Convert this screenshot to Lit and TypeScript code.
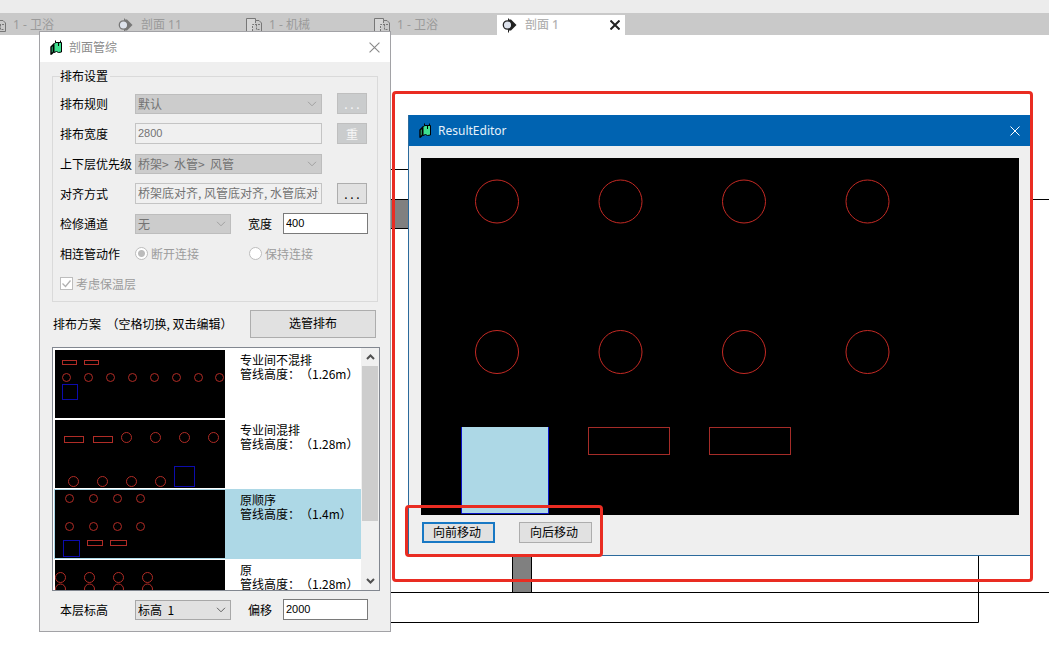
import { LitElement, html, svg, css } from "lit";
import { customElement, property } from "lit/decorators.js";

type Circle = [number, number, number];
type Box = [number, number, number, number];

interface Scheme {
  name: string;
  height: string;
  circles: Circle[];
  ducts: Box[];
  tray?: Box;
}

const row = (xs: number[], y: number, r: number): Circle[] => xs.map((x) => [x, y, r]);

const SCHEMES: Scheme[] = [
  {
    name: "专业间不混排",
    height: "1.26m",
    circles: row([11.5, 33.5, 55.5, 77.5, 99.5, 121.5, 143.5, 164.5], 27.5, 4),
    ducts: [[7.5, 10.5, 14, 4], [29.5, 10.5, 14, 4]],
    tray: [7.5, 34.5, 15, 15],
  },
  {
    name: "专业间混排",
    height: "1.28m",
    circles: [
      ...row([71.5, 100.5, 129.5, 158.5], 17.5, 5),
      ...row([18.5, 47.5, 76.5, 105.5], 61.5, 5),
    ],
    ducts: [[9.5, 16.5, 19, 6], [38.5, 16.5, 19, 6]],
    tray: [119.5, 46.5, 20, 20],
  },
  {
    name: "原顺序",
    height: "1.4m",
    circles: [
      ...row([14.5, 38.5, 62.5, 85.5], 8.5, 4),
      ...row([14.5, 38.5, 62.5, 85.5], 36.5, 4),
    ],
    ducts: [[32.5, 50.5, 15, 5], [55.5, 50.5, 16, 5]],
    tray: [8.5, 50.5, 16, 16],
  },
  {
    name: "原",
    height: "1.28m",
    circles: [
      ...row([5.5, 34.5, 63.5, 92.5], 17.5, 5),
      ...row([5.5, 34.5, 63.5, 92.5], 29, 5),
    ],
    ducts: [],
  },
];

const appIcon = html`<svg width="13" height="15" viewBox="0 0 13 15" aria-hidden="true">
  <path d="M1 7 3.5 4.5V12L1.5 14H1z" fill="#2fae70" stroke="#000" stroke-width="1.4" />
  <path d="M4 4.5 5.5 2.5H11.5V12L8.5 12.5 6.5 11.5 4 12.5z" fill="#3ee08f" stroke="#000" />
  <path d="M5.5 0.5V2.5M10.5 0.5V2.5M8.5 3v3" stroke="#000" fill="none" />
</svg>`;

const cross = (size: number, width: number) => html`<svg
  width=${size} height=${size} viewBox="0 0 10 10" aria-hidden="true">
  <path d="M0.5 0.5 9.5 9.5M9.5 0.5 0.5 9.5" stroke="currentColor" stroke-width=${width} fill="none" />
</svg>`;

const sectionIcon = html`<svg width="16" height="16" viewBox="0 0 16 16" aria-hidden="true">
  <path d="M6.5 1.5v14" stroke="currentColor" />
  <path d="M7 2.5H9L14.5 8 9 13.5H7z" fill="currentColor" />
  <circle cx="5.5" cy="8" r="4.2" fill="#dde2ec" stroke="currentColor" stroke-width="1.3" />
</svg>`;

const planIcon = html`<svg width="16" height="16" viewBox="0 0 16 16" aria-hidden="true" fill="none" stroke="currentColor">
  <path d="M6 14.5H0.5V1.5H9.5V3.5" fill="#d6d6d6" />
  <path d="M9.5 6V3.5H13L15.5 6V14.5H0.5" />
  <path d="M6.5 14V7.5H14M10.5 7.5V12.5H14" stroke-dasharray="2 1" />
</svg>`;

@customElement("scheme-item")
export class SchemeItem extends LitElement {
  @property({ attribute: false }) scheme!: Scheme;

  static styles = css`
    :host { display: flex; gap: 15px; padding: 1px; height: 68px; }
    .thumb { display: block; flex: none; background: #000; fill: none; }
    .duct { stroke: #b02c26; }
    .tray { stroke: #0c0cac; }
    .text { padding-top: 3px; line-height: 14px; white-space: nowrap; text-spacing-trim: space-all; }
  `;

  render() {
    const s = this.scheme;
    return html`
      <svg class="thumb" width="170" height="68" aria-hidden="true">
        ${s.ducts.map(([x, y, w, h]) => svg`<rect class="duct" x=${x} y=${y} width=${w} height=${h} />`)}
        ${s.circles.map(([x, y, r]) => svg`<circle class="duct" cx=${x} cy=${y} r=${r} />`)}
        ${s.tray
          ? svg`<rect class="tray" x=${s.tray[0]} y=${s.tray[1]} width=${s.tray[2]} height=${s.tray[3]} />`
          : null}
      </svg>
      <div class="text">
        <div>${s.name}</div>
        <div>管线高度：（${s.height}）</div>
      </div>
    `;
  }
}

@customElement("arrange-dialog")
export class ArrangeDialog extends LitElement {
  static styles = css`
    :host {
      display: block; box-sizing: border-box; width: 352px; background: #efefef;
      border: 1px solid #a2a2a6; padding-bottom: 11px; color: #000;
      font: 12px/16px "Noto Sans CJK SC", sans-serif;
    }
    .title {
      display: flex; align-items: center; gap: 6px; height: 30px; padding: 0 10px;
      background: #fff; color: #8c8c8c;
    }
    .title h1 { margin: 0; flex: 1; font: inherit; }
    .close { display: flex; padding: 0; border: 0; background: none; color: #888; }
    input, select, button { box-sizing: border-box; margin: 0; font: inherit; color: inherit; border-radius: 0; }
    fieldset {
      margin: 6px 12px 0; padding: 9px 7px 7px; border: 1px solid #dadada;
      display: flex; flex-direction: column; gap: 9px; min-width: 0;
    }
    legend { padding: 0 2px 0 0; margin: 0; height: 16px; }
    .row { display: flex; align-items: center; height: 21px; }
    .label { flex: none; width: 75px; white-space: nowrap; }
    .side-label { flex: none; width: 35px; margin-left: 17px; }
    select {
      appearance: none; height: 20px; width: 96px; padding: 0 18px 0 2px; line-height: 18px;
      border: 1px solid #a8a8a8; background: #e1e1e1 no-repeat right 4px center;
      background-image: url("data:image/svg+xml,%3Csvg xmlns='http://www.w3.org/2000/svg' width='10' height='6'%3E%3Cpath d='M1 .8l4 4 4-4' fill='none' stroke='%23606060'/%3E%3C/svg%3E");
    }
    select:disabled {
      border-color: #bdbdbd; background-color: #cccccc; color: #737373; opacity: 1;
      background-image: url("data:image/svg+xml,%3Csvg xmlns='http://www.w3.org/2000/svg' width='10' height='6'%3E%3Cpath d='M1 .8l4 4 4-4' fill='none' stroke='%23a0a0a0'/%3E%3C/svg%3E");
    }
    .wide, select.wide { width: 187px; }
    .text {
      height: 21px; padding: 0 2px 2px; border: 1px solid #7a7a7a; background: #fff;
    }
    .text.muted { border-color: #c4c4c4; background: #f0f0f0; color: #737373; }
    .number { width: 85px; }
    .digits { font-family: "Liberation Sans", "Noto Sans CJK SC", sans-serif; font-size: 11px; }
    .small {
      width: 30px; height: 21px; margin-left: 15px; padding: 0; line-height: 16px;
      border: 1px solid #adadad; background: #e1e1e1;
    }
    .small:disabled { border-color: #bfbfbf; background: #cacccd; color: #f6f6f6; }
    .option { display: flex; align-items: center; gap: 3px; width: 114px; color: #9c9c9c; white-space: nowrap; }
    .option input { appearance: none; flex: none; width: 13px; height: 13px; border: 1px solid #bdbdbd; background: #fff; }
    .option input[type="radio"] { border-radius: 50%; }
    .option input[type="radio"]:checked { background: radial-gradient(circle, #bcbcbc 3px, #fff 4px); }
    .option input[type="checkbox"]:checked {
      background: #fff url("data:image/svg+xml,%3Csvg xmlns='http://www.w3.org/2000/svg' width='11' height='11'%3E%3Cpath d='M1.5 5.5l3 3 5-6' fill='none' stroke='%23b0b0b0' stroke-width='1.3'/%3E%3C/svg%3E") center no-repeat;
    }
    .plan { display: flex; align-items: center; justify-content: space-between; margin: 8px 14px 9px 13px; }
    .plan span { white-space: pre; text-spacing-trim: space-all; }
    .pick { width: 126px; height: 28px; padding: 0 0 2px; border: 1px solid #adadad; background: #e1e1e1; }
    .list {
      display: flex; box-sizing: border-box; height: 244px; margin: 0 10px 8px 12px; padding-left: 1px;
      border: 1px solid #828790; background: #fff; overflow: hidden;
    }
    .items { flex: 1; min-width: 0; padding-top: 1px; }
    .items .active { background: #add8e6; }
    .scroll { display: flex; flex-direction: column; align-items: center; width: 18px; background: #f0f0f0; }
    .scroll button {
      display: flex; align-items: center; justify-content: center; flex: none;
      height: 18px; width: 15px; padding: 0; border: 0; background: none; color: #505050;
    }
    .track { flex: 1; }
    .thumb { width: 16px; height: 155px; background: #cdcdcd; }
    .foot { display: flex; align-items: center; height: 21px; padding-left: 20px; }
  `;

  render() {
    return html`
      <header class="title">
        ${appIcon}
        <h1>剖面管综</h1>
        <button class="close" aria-label="关闭">${cross(11, 1)}</button>
      </header>
      <fieldset>
        <legend>排布设置</legend>
        <div class="row">
          <label class="label" for="rule">排布规则</label>
          <select class="wide" id="rule" disabled><option>默认</option></select>
          <button class="small" disabled>. . .</button>
        </div>
        <div class="row">
          <label class="label" for="width">排布宽度</label>
          <input class="text muted wide digits" id="width" value="2800" readonly />
          <button class="small" disabled>重</button>
        </div>
        <div class="row">
          <label class="label" for="priority">上下层优先级</label>
          <select class="wide" id="priority" disabled><option>桥架>&nbsp; 水管>&nbsp; 风管</option></select>
        </div>
        <div class="row">
          <label class="label" for="align">对齐方式</label>
          <input class="text muted wide" id="align" value="桥架底对齐, 风管底对齐, 水管底对齐" readonly />
          <button class="small">. . .</button>
        </div>
        <div class="row">
          <label class="label" for="access">检修通道</label>
          <select id="access" disabled><option>无</option></select>
          <label class="side-label" for="access-width">宽度</label>
          <input class="text number digits" id="access-width" value="400" />
        </div>
        <div class="row" role="radiogroup" aria-label="相连管动作">
          <span class="label">相连管动作</span>
          <label class="option"><input type="radio" name="link" checked disabled />断开连接</label>
          <label class="option"><input type="radio" name="link" disabled />保持连接</label>
        </div>
        <div class="row">
          <label class="option"><input type="checkbox" checked disabled />考虑保温层</label>
        </div>
      </fieldset>
      <div class="plan">
        <span>排布方案  （空格切换, 双击编辑）</span>
        <button class="pick">选管排布</button>
      </div>
      <div class="list">
        <div class="items">
          ${SCHEMES.map(
            (s, i) => html`<scheme-item class=${i === 2 ? "active" : ""} .scheme=${s}></scheme-item>`
          )}
        </div>
        <div class="scroll">
          <button aria-label="向上">
            <svg width="9" height="6" viewBox="0 0 9 6"><path d="M1 5l3.5-3.5L8 5" fill="none" stroke="currentColor" stroke-width="2" /></svg>
          </button>
          <div class="track"><div class="thumb"></div></div>
          <button aria-label="向下">
            <svg width="9" height="6" viewBox="0 0 9 6"><path d="M1 1l3.5 3.5L8 1" fill="none" stroke="currentColor" stroke-width="2" /></svg>
          </button>
        </div>
      </div>
      <div class="foot">
        <label class="label" for="level">本层标高</label>
        <select id="level"><option>标高&nbsp; 1</option></select>
        <label class="side-label" for="offset">偏移</label>
        <input class="text number digits" id="offset" value="2000" />
      </div>
    `;
  }
}

@customElement("result-editor")
export class ResultEditor extends LitElement {
  static styles = css`
    :host {
      display: block; box-sizing: border-box; background: #efefef; border: 1px solid #2b6a9c; border-top: 0;
      font: 12px/16px "Noto Sans CJK SC", sans-serif; color: #000;
    }
    .title {
      display: flex; align-items: center; gap: 6px; height: 31px; padding: 0 10px;
      background: #0063b1; color: #fff;
    }
    .title h2 { margin: 0; flex: 1; font: 12px/16px "Noto Sans", sans-serif; color: #e6f1fa; }
    .close { display: flex; padding: 0; border: 0; background: none; color: #fff; }
    .body { padding: 12px 11px 12px 12px; }
    .canvas { display: block; width: 100%; height: 357px; background: #000; fill: none; }
    .pipe { stroke: #c42a24; }
    .duct { stroke: #a52c28; }
    .tray { fill: #add8e6; }
    .tray-edge { stroke: #0a14c8; }
    .actions { display: flex; gap: 24px; padding: 7px 0 0 1px; }
    .actions button {
      box-sizing: border-box; width: 73px; height: 21px; padding: 0 3px 2px 0; margin: 0;
      border: 1px solid #adadad; background: #e1e1e1; font: inherit; line-height: 15px; color: #000;
    }
    .actions .current { border: 2px solid #1878c4; }
  `;

  render() {
    const columns = [76, 199.5, 323, 446.5];
    return html`
      <header class="title">
        ${appIcon}
        <h2>ResultEditor</h2>
        <button class="close" aria-label="关闭">${cross(10, 1)}</button>
      </header>
      <div class="body">
        <svg class="canvas" role="img" aria-label="ResultEditor">
          ${[43.5, 194].map((y) => columns.map((x) => svg`<circle class="pipe" cx=${x} cy=${y} r="21.5" />`))}
          <rect class="duct" x="167.5" y="269.5" width="81" height="27" />
          <rect class="duct" x="288.5" y="269.5" width="81" height="27" />
          <rect class="tray" x="41" y="269" width="86" height="87" />
          <path class="tray-edge" d="M40.5 269V355.5H127.5V269" />
        </svg>
        <div class="actions">
          <button class="current">向前移动</button>
          <button>向后移动</button>
        </div>
      </div>
    `;
  }
}

@customElement("app-root")
export class AppRoot extends LitElement {
  static styles = css`
    :host {
      display: flex; flex-direction: column; position: relative; min-height: 100vh; overflow: hidden;
      background: #fff; font: 12px/16px "Noto Sans", "Noto Sans CJK SC", sans-serif;
    }
    .strip { height: 13px; background: #ececec; }
    .tabs { display: flex; align-items: flex-end; height: 22px; background: #c9c9c9; overflow: hidden; }
    .tabs-inner { display: flex; margin-left: -15px; }
    .tab {
      display: flex; align-items: center; gap: 7px; box-sizing: border-box; width: 128px; height: 20px;
      padding: 0 5px; border: 0; margin: 0; background: none; color: #777; font: inherit; text-align: left;
    }
    .tab .name { flex: 1; color: #9a9a9a; }
    .tab.active { background: #fff; color: #222; }
    .tab.active .name { color: #b2b2b2; font-weight: 500; }
    .tab svg { flex: none; }
    .workspace { flex: 1; display: flex; }
    .drawing { flex: 1; }
    .wall { fill: #808080; }
    .line { stroke: #000; }
    arrange-dialog { position: absolute; left: 39px; top: 31px; }
    result-editor { position: absolute; left: 408px; right: 18px; top: 115px; }
    .mark {
      position: absolute; box-sizing: border-box; border: 3px solid #e92c22; border-radius: 4px;
      pointer-events: none;
    }
    .mark.outer { left: 392px; right: 16px; top: 91px; height: 491px; }
    .mark.inner { left: 405px; width: 198px; top: 505px; height: 52px; }
  `;

  render() {
    const tabs = [
      { name: "1 - 卫浴", icon: planIcon },
      { name: "剖面 11", icon: sectionIcon },
      { name: "1 - 机械", icon: planIcon },
      { name: "1 - 卫浴", icon: planIcon },
    ];
    return html`
      <div class="strip"></div>
      <nav class="tabs">
        <div class="tabs-inner">
          ${tabs.map((t) => html`<button class="tab">${t.icon}<span class="name">${t.name}</span></button>`)}
          <button class="tab active">${sectionIcon}<span class="name">剖面 1</span>${cross(10, 2)}</button>
        </div>
      </nav>
      <main class="workspace">
        <svg class="drawing" aria-hidden="true">
          <g transform="translate(0 -35)">
            <rect class="wall" x="380" y="199" width="40" height="30" />
            <rect class="wall" x="512" y="550" width="20" height="42" />
            <path class="line" d="M380 169.5H420M380 228.5H420M512.5 550V592M531.5 550V592M380 622.5H978.5V550" fill="none" />
            <line class="line" x1="380" y1="199.5" x2="100%" y2="199.5" />
            <line class="line" x1="380" y1="592.5" x2="100%" y2="592.5" />
          </g>
        </svg>
      </main>
      <arrange-dialog></arrange-dialog>
      <result-editor></result-editor>
      <div class="mark outer"></div>
      <div class="mark inner"></div>
    `;
  }
}
